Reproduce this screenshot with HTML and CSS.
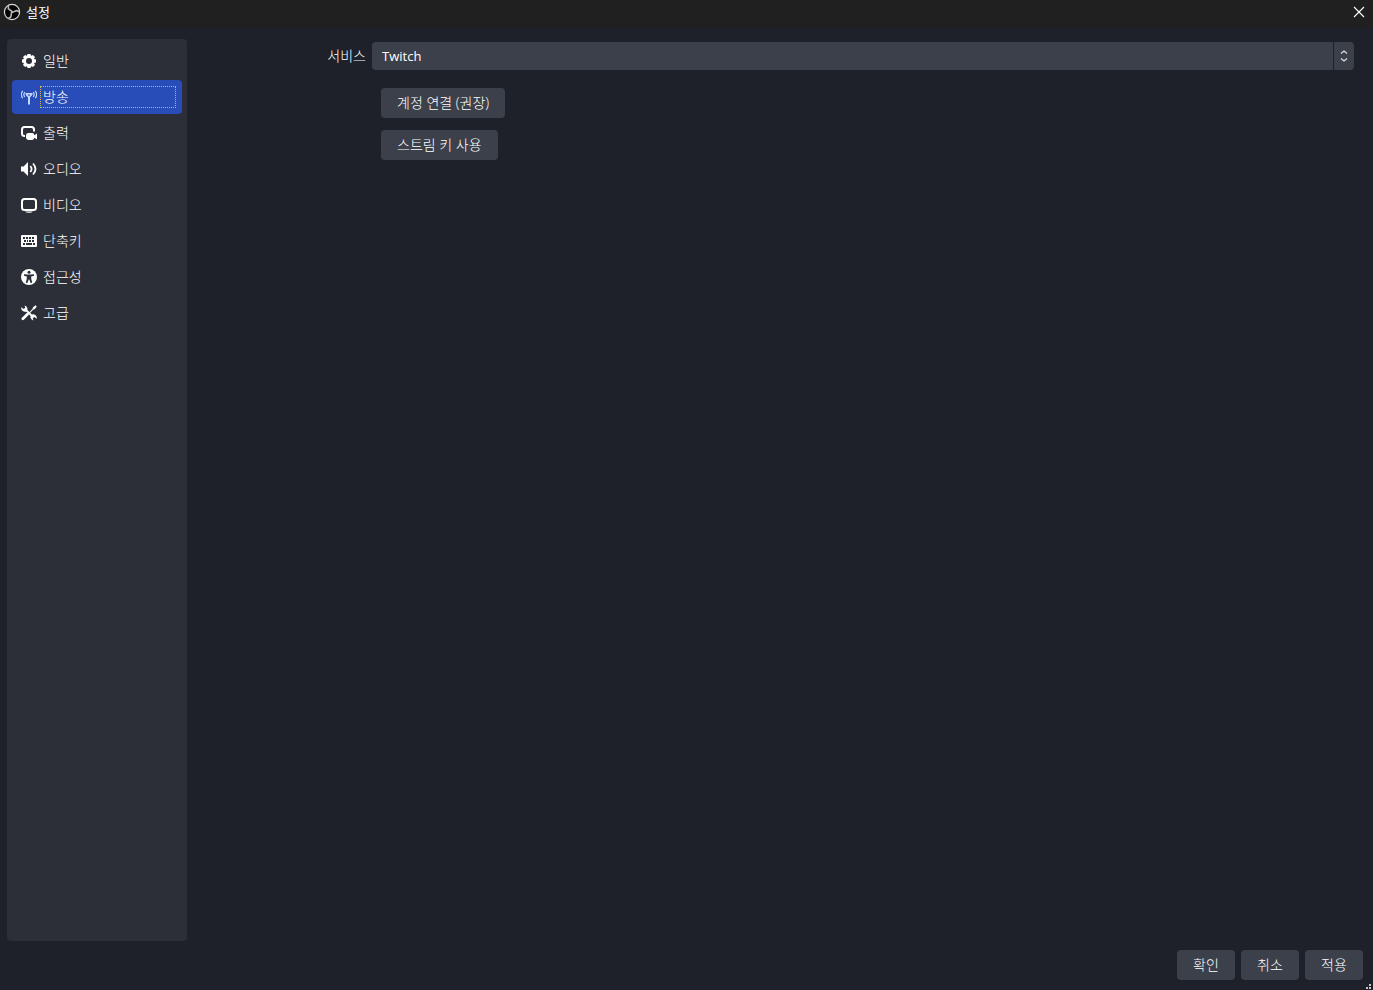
FILE: index.html
```
<!DOCTYPE html>
<html lang="ko">
<head>
  <meta charset="UTF-8" />
  <meta name="viewport" content="width=device-width, initial-scale=1.0"/>
  <title>설정</title>
  <link rel="stylesheet" href="styles.css">
</head>
<body>

<header class="titlebar">
  <svg class="logo" viewBox="0 0 18 18" width="18" height="18" aria-hidden="true">
    <circle cx="9" cy="9" r="7.6" fill="#050505" stroke="#d8d8d8" stroke-width="1.2"/>
    <g fill="none" stroke="#b8b8b8" stroke-width="1.6" stroke-linecap="round">
      <path d="M9 9.400C9 7.600 7.800 7.400 6.400 6.600C5.300 5.900 5 4.800 5.400 3.600"/>
      <path d="M9 9.400C9 7.600 7.800 7.400 6.400 6.600C5.300 5.900 5 4.800 5.400 3.600" transform="rotate(120 9 9)"/>
      <path d="M9 9.400C9 7.600 7.800 7.400 6.400 6.600C5.300 5.900 5 4.800 5.400 3.600" transform="rotate(240 9 9)"/>
    </g>
  </svg>
  <h1>설정</h1>
  <button class="close-btn" type="button" aria-label="닫기">
    <svg viewBox="0 0 12 12" width="12" height="12"><path d="M1 1l10 10M11 1L1 11" stroke="#fff" stroke-width="1.1"/></svg>
  </button>
</header>

<div class="content">
  <nav class="sidebar">
    <button class="nav-item" type="button">
      <svg viewBox="0 0 16 16" width="16" height="16">
        <g fill="#fefefe">
          <path fill-rule="evenodd" d="M8 2.200a5.800 5.800 0 1 0 0 11.600a5.800 5.800 0 1 0 0-11.600zM8 5a3 3 0 1 1 0 6a3 3 0 1 1 0-6z"/>
          <path d="M6.500 1h3l.6 2.200H5.900zM6.500 15h3l.6-2.200H5.900zM1 6.500v3l2.200.6V5.900zM15 6.500v3l-2.200.6V5.900z"/>
          <path transform="rotate(45 8 8)" d="M6.500 1h3l.6 2.200H5.900zM6.500 15h3l.6-2.200H5.900zM1 6.500v3l2.200.6V5.900zM15 6.500v3l-2.200.6V5.900z"/>
        </g>
      </svg>
      <span>일반</span>
    </button>
    <button class="nav-item active" type="button" aria-current="page">
      <svg viewBox="0 0 16 16" width="16" height="16" fill="none" stroke="#c3d8ff">
        <path d="M4.500 4h7v1.500L9 8.500V15.500H7V8.500L4.500 5.500z" fill="#c3d8ff" stroke="none"/>
        <path d="M6.600 5.500h2.800L8 7.300z" fill="#284cb8" stroke="none"/>
        <path d="M1.800 1.800C0 4 0 7 1.800 9.200M14.200 1.800C16 4 16 7 14.200 9.200M3.800 3.200C2.600 4.700 2.600 6.500 3.800 8M12.200 3.200C13.400 4.700 13.400 6.500 12.200 8" stroke-width="1.200"/>
      </svg>
      <span>방송</span>
    </button>
    <button class="nav-item" type="button">
      <svg viewBox="0 0 16 16" width="16" height="16">
        <path d="M4 11H3.500Q1 11 1 8.500V4.500Q1 2 3.500 2h7Q13 2 13 4.500v2" fill="none" stroke="#fefefe" stroke-width="2"/>
        <rect x="5" y="8" width="8.400" height="7" rx="2.400" fill="#fefefe"/>
        <path d="M12.500 10.700L16 8.400v6L12.500 12.300z" fill="#fefefe"/>
      </svg>
      <span>출력</span>
    </button>
    <button class="nav-item" type="button">
      <svg viewBox="0 0 16 16" width="16" height="16">
        <path d="M0 5.500h2.500L7 1v14l-4.500-4.500H0z" fill="#fefefe"/>
        <path d="M9.300 5q2.600 3 0 6M12 2.500q5 5.500 0 11" fill="none" stroke="#fefefe" stroke-width="1.800"/>
      </svg>
      <span>오디오</span>
    </button>
    <button class="nav-item" type="button">
      <svg viewBox="0 0 16 16" width="16" height="16">
        <rect x="1" y="2" width="14" height="11" rx="2.500" fill="none" stroke="#fefefe" stroke-width="2"/>
        <path d="M4 14.600h8Q11 15.800 8 15.800T4 14.600z" fill="#fefefe"/>
      </svg>
      <span>비디오</span>
    </button>
    <button class="nav-item" type="button">
      <svg viewBox="0 0 16 16" width="16" height="16">
        <rect y="2" width="16" height="12" rx="1" fill="#fefefe"/>
        <path d="M2 4h2v2H2zM5 4h2v2H5zM8 4h2v2H8zM11 4h2v2h-2zM3 7h2v2H3zM6 7h1v2H6zM8 7h2v2H8zM11 7h2v2h-2zM2 10h2v2H2zM5 10h6v2H5zM12 10h2v2h-2z" fill="#2c2e38"/>
      </svg>
      <span>단축키</span>
    </button>
    <button class="nav-item" type="button">
      <svg viewBox="0 0 16 16" width="16" height="16">
        <circle cx="8" cy="8" r="8" fill="#fefefe"/>
        <circle cx="8" cy="3.300" r="1.500" fill="#2c2e38"/>
        <path d="M3 5.200l3.500.4h3L13 5.200v1.500l-2.800.7v2.200l1 4.100-1.600.3L8.300 10.500h-.6l-1.300 3.500-1.600-.3 1-4.100V7.400L3 6.700z" fill="#2c2e38"/>
      </svg>
      <span>접근성</span>
    </button>
    <button class="nav-item" type="button">
      <svg viewBox="0 0 16 16" width="16" height="16">
        <path d="M15.800 1.500L14.500.2l-2.700 2.200-.2 1.400L7 8.400l.8.8 4.600-4.600 1.300-.3z" fill="#fefefe"/>
        <path d="M6.400 9.300L1.900 13.800" stroke="#fefefe" stroke-width="2.800" stroke-linecap="round"/>
        <path d="M4 4l8 8" stroke="#fefefe" stroke-width="1.800"/>
        <path d="M.3 2.200A3.700 3.700 0 0 0 5.800 6.200A3.700 3.700 0 0 0 3.400.4L4.300 2.500 2.800 4zM15.700 13.800A3.700 3.700 0 0 0 10.200 9.800A3.700 3.700 0 0 0 12.600 15.600L11.700 13.500 13.200 12z" fill="#fefefe"/>
      </svg>
      <span>고급</span>
    </button>
  </nav>

  <main class="panel">
    <div class="form-row">
      <label for="service">서비스</label>
      <div class="combo">
        <select id="service">
          <option>Twitch</option>
        </select>
        <span class="combo-arrows">
          <svg viewBox="0 0 8 14" width="8" height="14" fill="none" stroke="#e4e4e6" stroke-width="1.100"><path d="M1 4.500l3-2.500 3 2.500M1 9.500l3 2.500 3-2.500"/></svg>
        </span>
      </div>
    </div>
    <div class="account-buttons">
      <button class="btn" type="button">계정 연결 (권장)</button>
      <button class="btn" type="button">스트림 키 사용</button>
    </div>
  </main>
</div>

<footer class="dialog-buttons">
  <button class="btn" type="button">확인</button>
  <button class="btn" type="button">취소</button>
  <button class="btn" type="button">적용</button>
  <svg class="size-grip" viewBox="0 0 5 5" width="5" height="5" aria-hidden="true"><path d="M3 0h2v2H3zM0 3h2v2H0zM3 3h2v2H3z" fill="#c8c8c8"/></svg>
</footer>

</body>
</html>
```
FILE: styles.css
```
* {
  box-sizing: border-box;
}

body {
  margin: 0;
  min-height: 100vh;
  display: flex;
  flex-direction: column;
  background: #1f212a;
  color: #fff;
  font-family: "Open Sans", "Noto Sans CJK KR", sans-serif;
  font-size: 14px;
  font-weight: 300;
  line-height: 20px;
}

button,
select {
  font: inherit;
  color: inherit;
  border: none;
}

/* Title bar */
.titlebar {
  display: flex;
  align-items: center;
  height: 28px;
  padding: 0 8px 4px 3px;
  background: #202020;
}

.titlebar h1 {
  flex: 1;
  margin: 0 0 0 5px;
  font-size: 13px;
  font-weight: 400;
}

.close-btn {
  display: flex;
  padding: 0;
  background: transparent;
}

/* Category list */
.content {
  flex: 1;
  display: flex;
  padding: 11px 19px 0 7px;
}

.sidebar {
  width: 180px;
  display: flex;
  flex-direction: column;
  gap: 2px;
  padding: 5px;
  background: #2c2e38;
  border-radius: 4px;
}

.nav-item {
  display: flex;
  align-items: center;
  gap: 3px;
  height: 34px;
  padding: 0 6px 0 9px;
  background: transparent;
  border-radius: 4px;
  text-align: left;
}

.nav-item span {
  flex: 1;
  padding: 0 2px;
  border: 1px dotted transparent;
}

.nav-item.active {
  background: #284cb8;
}

.nav-item.active span {
  border-color: #d7b354;
}

/* Stream settings */
.panel {
  flex: 1;
  padding-top: 3px;
}

.form-row {
  display: grid;
  grid-template-columns: 179px 1fr;
  align-items: center;
  gap: 6px;
}

.form-row label {
  text-align: right;
}

.combo {
  position: relative;
}

.combo select {
  display: block;
  width: 100%;
  height: 28px;
  padding: 0 30px 0 10px;
  appearance: none;
  background: #3c404b;
  border-radius: 4px;
  font-size: 13px;
  font-weight: 400;
}

.combo-arrows {
  position: absolute;
  top: 0;
  right: 0;
  bottom: 0;
  width: 21px;
  display: flex;
  align-items: center;
  justify-content: center;
  border-left: 1px solid #1f212a;
  pointer-events: none;
}

.account-buttons {
  display: flex;
  flex-direction: column;
  align-items: flex-start;
  gap: 12px;
  padding: 18px 0 0 194px;
}

.btn {
  height: 30px;
  padding: 0 16px;
  background: #3c404b;
  border-radius: 4px;
}

/* Bottom buttons */
.dialog-buttons {
  position: relative;
  display: flex;
  justify-content: flex-end;
  gap: 6px;
  padding: 9px 10px 10px;
}

.dialog-buttons .btn {
  min-width: 58px;
}

.size-grip {
  position: absolute;
  right: 2px;
  bottom: 1px;
}
```
